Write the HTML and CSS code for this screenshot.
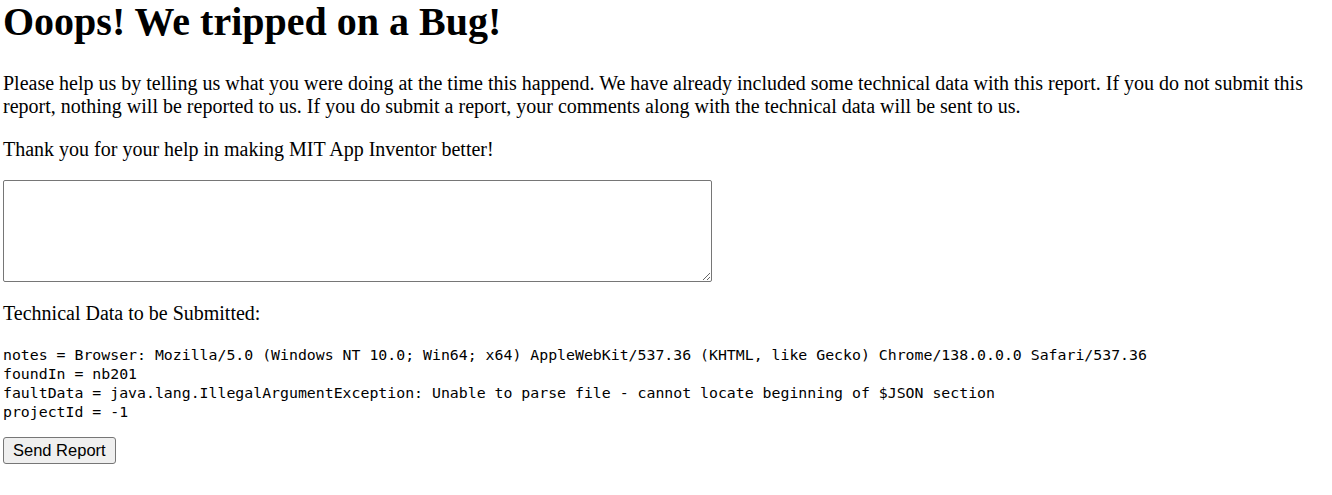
FILE: index.html
```html
<!DOCTYPE html>
<html lang="en">
<head>
  <meta charset="UTF-8">
  <title>Bug Report</title>
  <link rel="stylesheet" href="styles.css">
</head>
<body>
  <div class="report">
    <h1 class="title">Ooops! We tripped on a Bug!</h1>
    <p class="intro">Please help us by telling us what you were doing at the time this happend. We have already included some technical data with this report. If you do not submit this report, nothing will be reported to us. If you do submit a report, your comments along with the technical data will be sent to us.</p>
    <p class="intro thanks">Thank you for your help in making MIT App Inventor better!</p>
    <textarea class="comments"></textarea>
    <p class="intro tech-label">Technical Data to be Submitted:</p>
    <pre class="tech-data">notes = Browser: Mozilla/5.0 (Windows NT 10.0; Win64; x64) AppleWebKit/537.36 (KHTML, like Gecko) Chrome/138.0.0.0 Safari/537.36
foundIn = nb201
faultData = java.lang.IllegalArgumentException: Unable to parse file - cannot locate beginning of $JSON section
projectId = -1</pre>
    <button class="send-btn">Send Report</button>
  </div>
</body>
</html>
```

FILE: styles.css
```css
body {
  margin: 0;
  padding: 0 3px;
  background: #fff;
  color: #000;
  font-family: "Liberation Serif", "Times New Roman", serif;
  font-size: 20px;
}
.report {
  display: flex;
  flex-direction: column;
  align-items: flex-start;
}
.title {
  margin: 0 0 28px;
  font-size: 40px;
  line-height: 44px;
  font-weight: bold;
}
.intro {
  margin: 0 0 20px;
  line-height: 23px;
}
.intro.thanks { margin-bottom: 19px; }
.intro.tech-label { margin-bottom: 21px; }
.comments {
  box-sizing: border-box;
  width: 709px;
  height: 102px;
  margin: 0 0 20px;
  border: 1px solid #767676;
  border-radius: 2px;
  padding: 2px;
  resize: both;
}
.tech-data {
  margin: 0 0 15px;
  font-family: "DejaVu Sans Mono", "Liberation Mono", monospace;
  font-size: 14.85px;
  line-height: 19px;
}
.send-btn {
  font-family: "Liberation Sans", Arial, sans-serif;
  font-size: 16.5px;
  padding: 1px 9px;
  height: 27px;
  background: #efefef;
  border: 1px solid #767676;
  border-radius: 3px;
  color: #000;
}
```
